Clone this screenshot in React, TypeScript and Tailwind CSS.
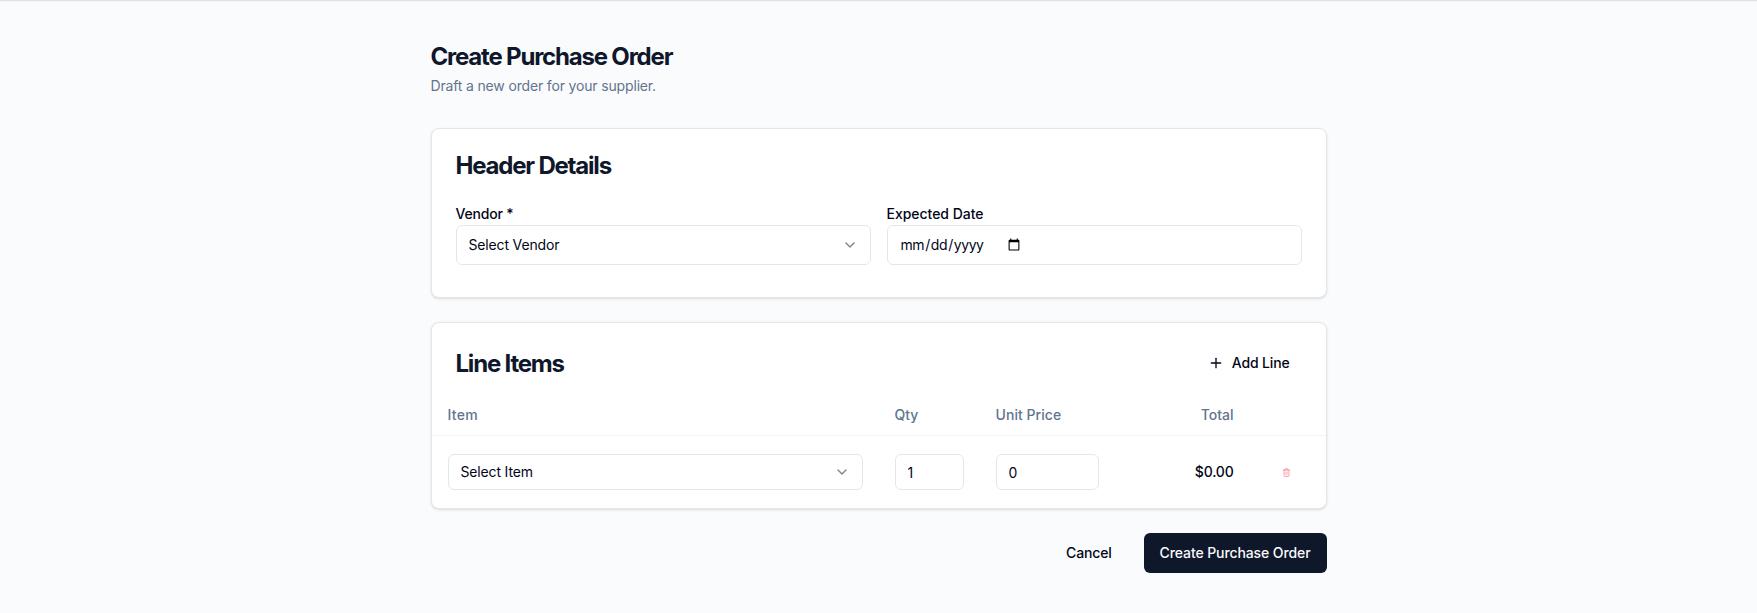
import React, { useState } from 'react';
import { ChevronDown, Plus } from 'lucide-react';

interface SelectFieldProps {
  id: string;
  placeholder: string;
  className: string;
}

interface LineItem {
  id: number;
  qty: number;
  price: number;
}

function SelectField({ id, placeholder, className }: SelectFieldProps) {
  return (
    <div className="relative">
      <select
        id={id}
        className={`block w-full appearance-none rounded-md border border-[#e4e7ea] bg-white px-3 text-sm tracking-[-0.16px] text-slate-950 ${className}`}
      >
        <option value="">{placeholder}</option>
      </select>
      <ChevronDown className="pointer-events-none absolute right-[13px] top-1/2 h-4 w-4 -translate-y-1/2 text-slate-950 opacity-50" />
    </div>
  );
}

function TrashIcon() {
  return (
    <svg className="h-[9px] w-[7px]" viewBox="0 0 7 9" fill="none" stroke="currentColor" strokeWidth="0.65" strokeLinecap="round" strokeLinejoin="round">
      <path d="M0.5 2h6" />
      <path d="M1 2v5.5a0.9 0.9 0 0 0 0.9 0.9h3.2a0.9 0.9 0 0 0 0.9-0.9v-5.5" />
      <path d="M2.3 2v-0.7a0.7 0.7 0 0 1 0.7-0.7h1a0.7 0.7 0 0 1 0.7 0.7v0.7" />
      <path d="M2.9 4v2.4M4.1 4v2.4" strokeWidth="0.5" />
    </svg>
  );
}

export default function App() {
  const [lines, setLines] = useState<LineItem[]>([{ id: 1, qty: 1, price: 0 }]);

  const addLine = () => {
    setLines([...lines, { id: Date.now(), qty: 1, price: 0 }]);
  };

  const updateLine = (id: number, field: 'qty' | 'price', value: number) => {
    setLines(lines.map((line) => (line.id === id ? { ...line, [field]: value } : line)));
  };

  const removeLine = (id: number) => {
    setLines(lines.filter((line) => line.id !== id));
  };

  return (
    <div className="min-h-screen border-t border-[#e1e4e8] bg-[#fafbfd] font-['Inter',sans-serif] text-slate-950 shadow-[inset_0_1px_0_#f1f3f6]">
      <div className="mx-auto max-w-4xl space-y-6 pt-10">
        <div className="mb-8">
          <h1 className="text-2xl font-bold tracking-tighter text-slate-900">Create Purchase Order</h1>
          <p className="mt-[3px] text-sm tracking-[-0.16px] text-slate-500">Draft a new order for your supplier.</p>
        </div>

        {/* Header Details */}
        <div className="rounded-lg border border-[#e4e7ea] bg-white px-6 pt-[25px] pb-8 shadow-sm">
          <h3 className="text-2xl leading-none font-bold tracking-tighter text-slate-900">Header Details</h3>
          <div className="mt-6 grid grid-cols-2 gap-4">
            <div>
              <label htmlFor="vendor" className="block pt-px text-sm leading-[22px] font-medium tracking-[-0.2px]">Vendor *</label>
              <SelectField id="vendor" placeholder="Select Vendor" className="h-10" />
            </div>
            <div>
              <label htmlFor="expected-date" className="block pt-px text-sm leading-[22px] font-medium tracking-[-0.03px]">Expected Date</label>
              <input
                id="expected-date"
                type="date"
                className="flex h-10 w-full rounded-md border border-[#e4e7ea] bg-white px-3 py-2 text-sm tracking-[-0.42px] [&::-webkit-calendar-picker-indicator]:ml-[2px]"
              />
            </div>
          </div>
        </div>

        {/* Line Items */}
        <div className="rounded-lg border border-[#e4e7ea] bg-white shadow-sm">
          <div className="flex items-center justify-between px-6 pt-6 pb-4">
            <h3 className="pt-px text-2xl leading-none font-bold tracking-tighter text-slate-900">Line Items</h3>
            <button onClick={addLine} className="flex h-8 items-center gap-2 rounded-md px-3 text-sm font-medium tracking-[-0.16px]">
              <Plus className="h-4 w-4" />
              Add Line
            </button>
          </div>
          <table className="w-full table-fixed border-separate border-spacing-0 text-sm">
            <thead>
              <tr className="h-[41px] text-left text-slate-500">
                <th className="w-[447px] border-b border-slate-100 px-4 font-medium tracking-[0.3px]">Item</th>
                <th className="w-[101px] border-b border-slate-100 px-4 font-medium">Qty</th>
                <th className="w-[135px] border-b border-slate-100 px-4 font-medium tracking-[0.05px]">Unit Price</th>
                <th className="w-[135px] border-b border-slate-100 px-4 text-right font-medium">Total</th>
                <th className="border-b border-slate-100" />
              </tr>
            </thead>
            <tbody>
              {lines.map((line) => (
                <tr key={line.id} className="h-[72px]">
                  <td className="px-4">
                    <SelectField id={`item-${line.id}`} placeholder="Select Item" className="h-9" />
                  </td>
                  <td className="px-4">
                    <input
                      type="number"
                      value={line.qty}
                      onChange={(e) => updateLine(line.id, 'qty', Number(e.target.value))}
                      className="block h-9 w-full rounded-md border border-[#e4e7ea] bg-white px-3"
                    />
                  </td>
                  <td className="px-4">
                    <input
                      type="number"
                      value={line.price}
                      onChange={(e) => updateLine(line.id, 'price', Number(e.target.value))}
                      className="block h-9 w-full rounded-md border border-[#e4e7ea] bg-white px-3"
                    />
                  </td>
                  <td className="px-4 text-right font-medium tracking-[-0.2px]">${(line.qty * line.price).toFixed(2)}</td>
                  <td className="px-4">
                    <button
                      onClick={() => removeLine(line.id)}
                      className="flex h-9 w-[41px] items-center justify-center text-rose-400"
                    >
                      <TrashIcon />
                    </button>
                  </td>
                </tr>
              ))}
            </tbody>
          </table>
        </div>

        <div className="flex justify-end gap-4">
          <button className="h-10 rounded-md px-4 text-sm font-medium tracking-[-0.16px]">Cancel</button>
          <button className="h-10 rounded-md bg-slate-900 px-4 text-sm font-medium tracking-[-0.1px] text-slate-50">
            Create Purchase Order
          </button>
        </div>
      </div>
    </div>
  );
}
